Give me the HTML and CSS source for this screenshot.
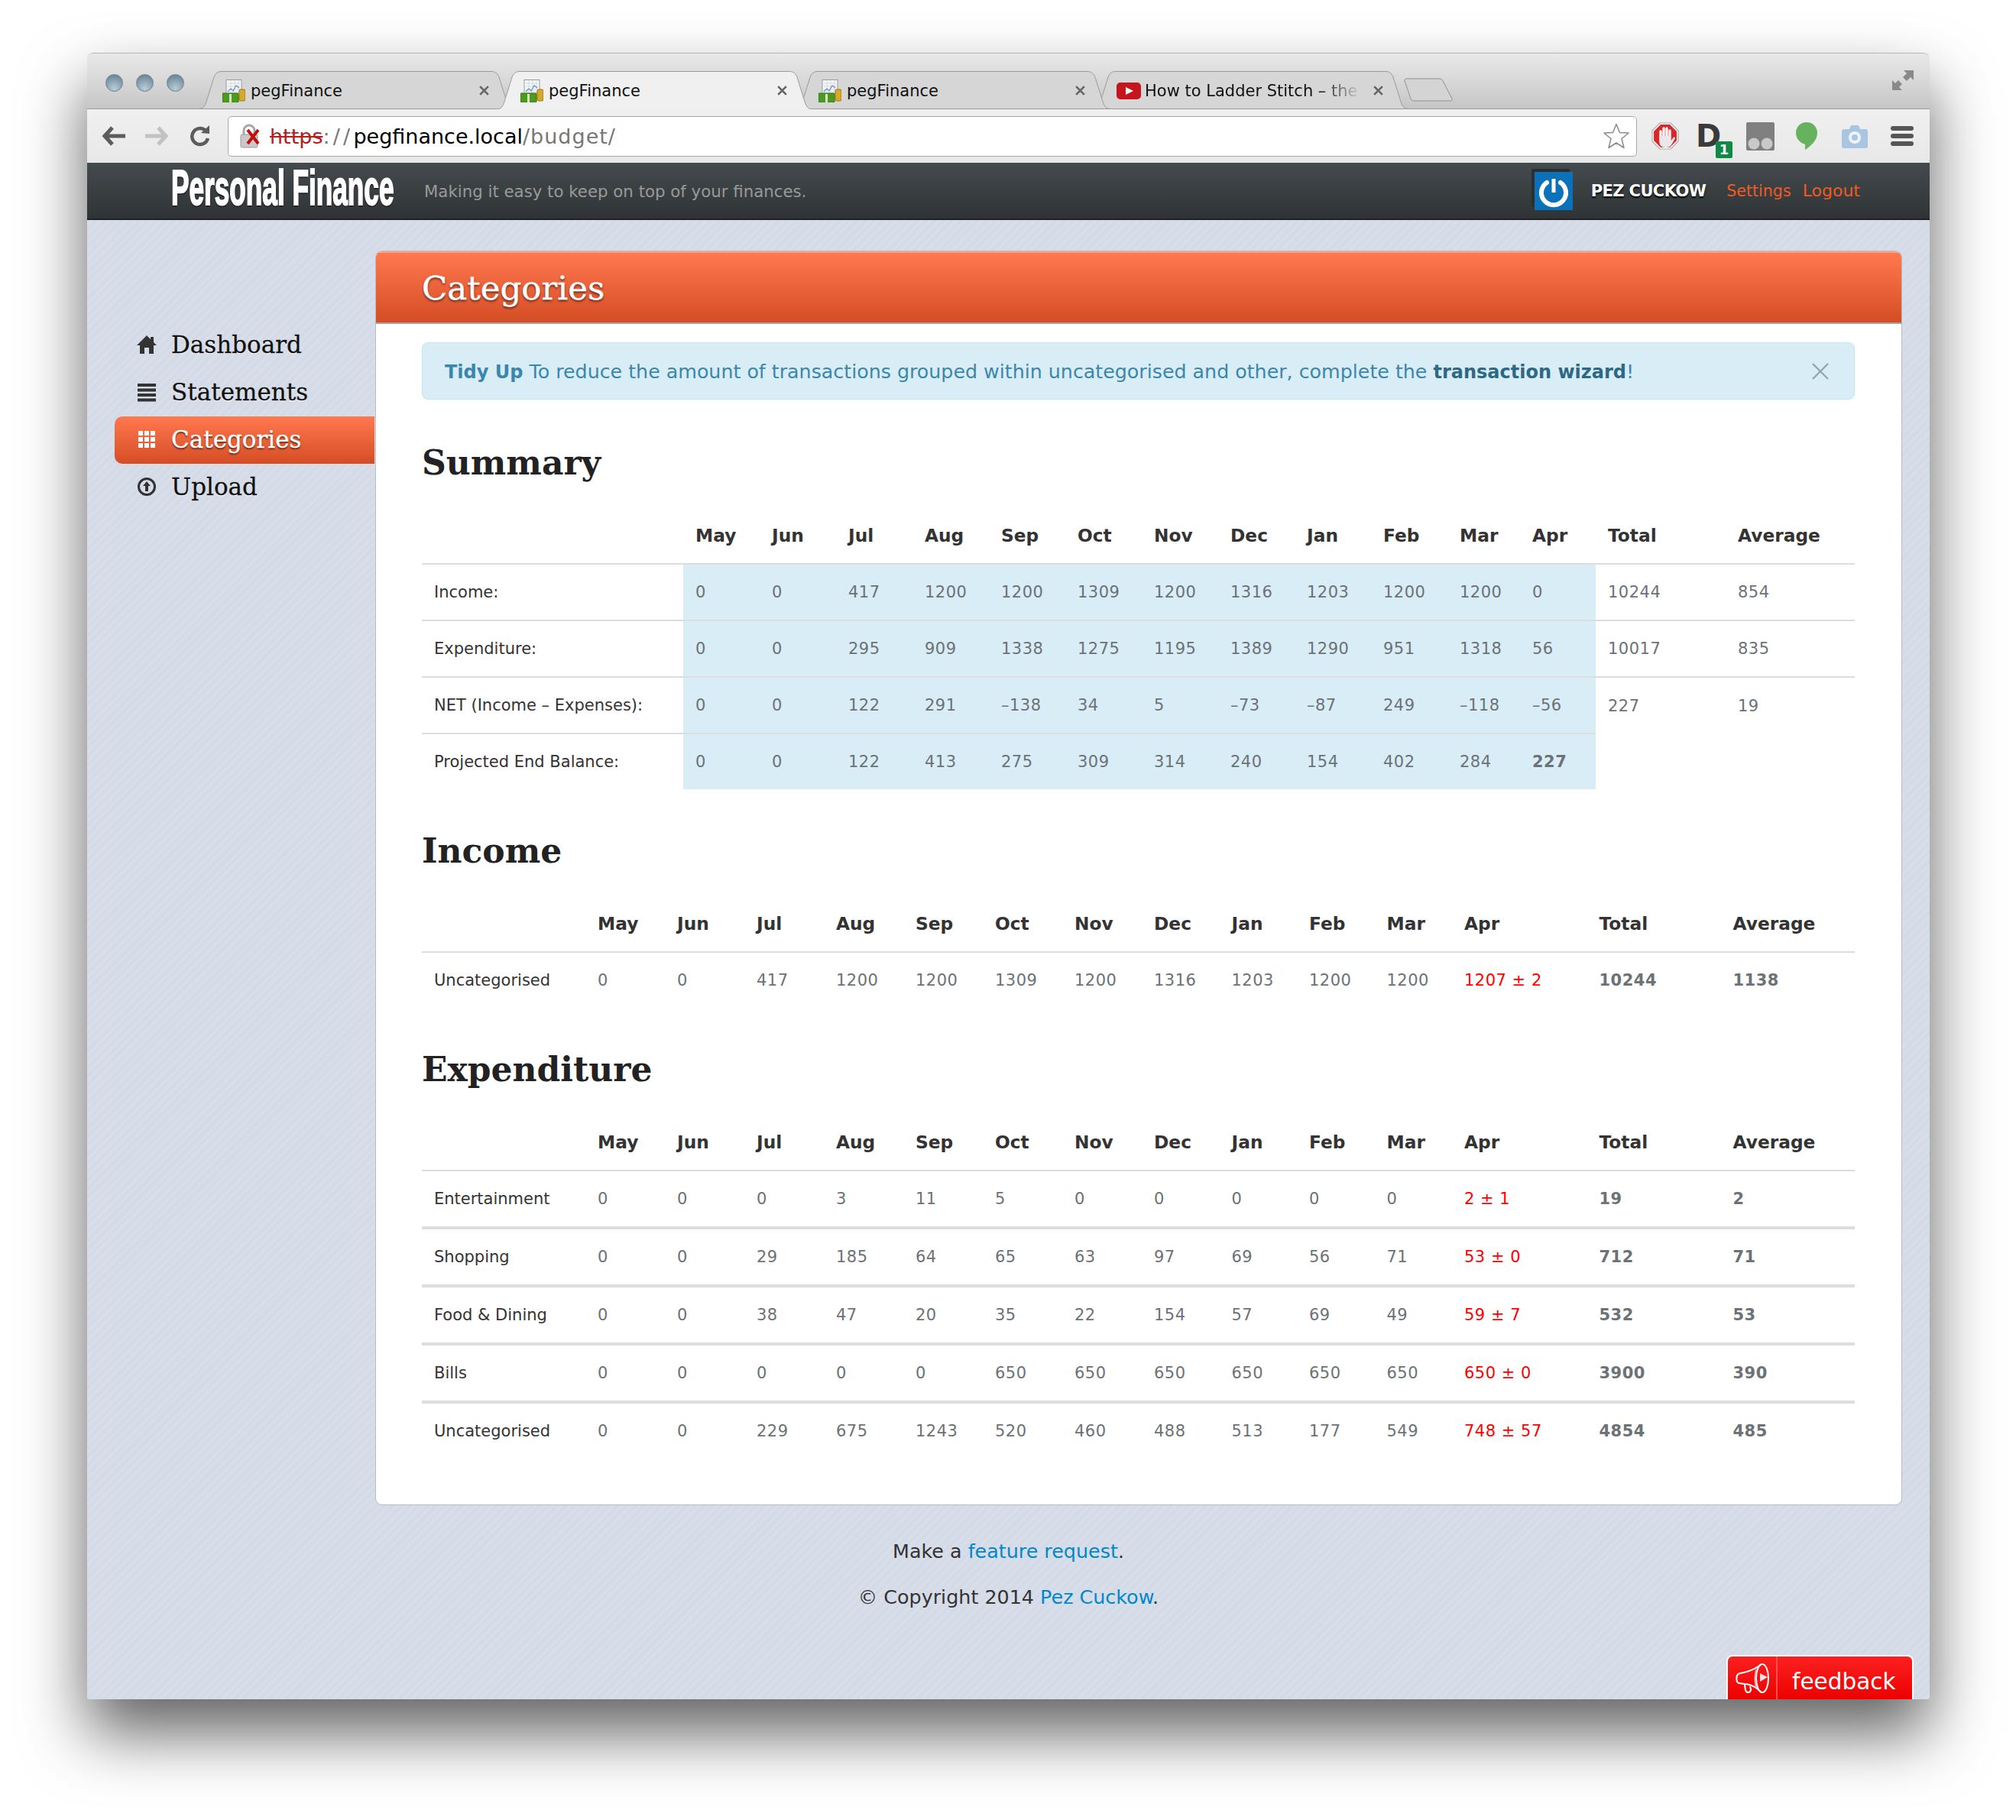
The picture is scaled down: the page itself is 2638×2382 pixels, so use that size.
FILE: index.html
```html
<!DOCTYPE html>
<html>

<head>
    <title>pegFinance</title>
    <link rel="stylesheet" href="styles.css">
</head>

<body>
    <svg class="symbols">
        <symbol id="fav" viewBox="0 0 30 30">
            <rect x="5" y="0.5" width="20" height="24" fill="#f4f6f8" stroke="#9a9a9a"/>
            <path d="M7 5h16M7 9h16M7 13h16M7 17h16M11 1v22M16 1v22M21 1v22" stroke="#d5dbe2" stroke-width="1"/>
            <path d="M7 16l4-4 3 3 4-7 4 3" fill="none" stroke="#6d8fc2" stroke-width="1.2"/>
            <rect x="22" y="13" width="8" height="15" rx="2" fill="#d6a92a" stroke="#9b7713"/>
            <rect x="0" y="18" width="21" height="12" rx="1" fill="#4d9a1e" stroke="#35720f"/>
            <rect x="9" y="19" width="3" height="11" fill="#d8e8c8"/>
        </symbol>
        <symbol id="close" viewBox="0 0 14 14">
            <path d="M2 2l10 10M12 2L2 12" stroke="#666" stroke-width="2.4"/>
        </symbol>
    </svg>

    <div class="window">
        <div class="tabstrip">
            <div class="lights"><span class="light"></span><span class="light"></span><span class="light"></span></div>
            <div class="tabs">
                <div class="tab">
                    <svg class="tab-shape" viewBox="0 0 415 50" preserveAspectRatio="none"><path d="M0 49.5C7 49.5 9 46 11 40L21 8C23 3 26 .5 31 .5H384C389 .5 392 3 394 8L404 40C406 46 408 49.5 415 49.5Z"/></svg>
                    <svg class="favicon"><use href="#fav"/></svg>
                    <span class="tab-title">pegFinance</span>
                    <svg class="tab-close"><use href="#close"/></svg>
                </div>
                <div class="tab tab-active">
                    <svg class="tab-shape" viewBox="0 0 415 50" preserveAspectRatio="none"><path d="M0 50C7 50 9 46 11 40L21 8C23 3 26 .5 31 .5H384C389 .5 392 3 394 8L404 40C406 46 408 50 415 50"/></svg>
                    <svg class="favicon"><use href="#fav"/></svg>
                    <span class="tab-title">pegFinance</span>
                    <svg class="tab-close"><use href="#close"/></svg>
                </div>
                <div class="tab">
                    <svg class="tab-shape" viewBox="0 0 415 50" preserveAspectRatio="none"><path d="M0 49.5C7 49.5 9 46 11 40L21 8C23 3 26 .5 31 .5H384C389 .5 392 3 394 8L404 40C406 46 408 49.5 415 49.5Z"/></svg>
                    <svg class="favicon"><use href="#fav"/></svg>
                    <span class="tab-title">pegFinance</span>
                    <svg class="tab-close"><use href="#close"/></svg>
                </div>
                <div class="tab tab-last">
                    <svg class="tab-shape" viewBox="0 0 415 50" preserveAspectRatio="none"><path d="M0 49.5C7 49.5 9 46 11 40L21 8C23 3 26 .5 31 .5H384C389 .5 392 3 394 8L404 40C406 46 408 49.5 415 49.5Z"/></svg>
                    <svg class="favicon favicon-yt" viewBox="0 0 32 22"><rect width="32" height="22" rx="5" fill="#c4161c"/><path d="M12 6l10 5-10 5z" fill="#fff"/></svg>
                    <span class="tab-title tab-title-fade">How to Ladder Stitch – the</span>
                    <svg class="tab-close"><use href="#close"/></svg>
                </div>
            </div>
            <svg class="newtab" viewBox="0 0 64 31"><path d="M1 4C1 2 2 1 4 1H46C49 1 50 2 51 4L63 27C64 29 63 30 61 30H13C11 30 10 29 9 27Z" fill="#d4d4d4" stroke="#8f8f8f"/></svg>
            <svg class="expand" viewBox="0 0 28 28"><path d="M15 1h13v13l-4-4-5 5-5-5 5-5zM0 14l4 4 4-4 5 5-4 4 4 4H0z" fill="#8a8a8a"/></svg>
        </div>

        <div class="toolbar">
            <svg class="nav nav-back" viewBox="0 0 31 26"><path d="M13 2L3 13l10 11M3 13h27" fill="none" stroke="#5c5c5c" stroke-width="5"/></svg>
            <svg class="nav nav-forward" viewBox="0 0 31 26"><path d="M18 2l10 11-10 11M28 13H1" fill="none" stroke="#c2c2c2" stroke-width="5"/></svg>
            <svg class="nav nav-reload" viewBox="0 0 27 30"><path d="M22 9A10.500 10.500 0 1 0 24 18" fill="none" stroke="#5c5c5c" stroke-width="4.500"/><path d="M15 11L26 12V1z" fill="#5c5c5c"/></svg>
            <div class="address">
                <svg class="lock" viewBox="0 0 28 32">
                    <path d="M6 14V9a7 7 0 0 1 14 0v5" fill="none" stroke="#a8a8a8" stroke-width="3"/>
                    <rect x="2" y="14" width="22" height="17" rx="2" fill="#c9c9c9" stroke="#9a9a9a"/>
                    <path d="M11 8l14 18M25 8L11 26" stroke="#c40e0e" stroke-width="4"/>
                </svg>
                <span class="url-https">https</span><span class="url-sep">://</span><span class="url-host">pegfinance.local</span><span class="url-path">/budget/</span>
                <svg class="star" viewBox="0 0 36 34"><path d="M18 1.500l4.500 11 11.500.500-9 7.500 3 12L18 26l-10 6.500 3-12-9-7.500 11.500-.500z" fill="#fff" stroke="#8a8a8a" stroke-width="1.500" stroke-linejoin="round"/></svg>
            </div>
            <svg class="ext ext-stop" viewBox="0 0 36 36">
                <path d="M11 1h14l10 10v14L25 35H11L1 25V11z" fill="#fff" stroke="#a8a8a8" stroke-width="1.200"/>
                <path d="M12 3h12l9 9v12l-9 9H12l-9-9V12z" fill="#d9282b"/>
                <path d="M12 22V12M16 19V8M20 19V8M24 20V11" stroke="#f8f8f8" stroke-width="3.400" stroke-linecap="round"/>
                <path d="M10.300 18h15.400v6l3-4c1.500-1.500 3 0 2 1.500l-4 7c-1.500 3-4 4.500-8 4.500-6 0-8.400-3-8.400-8z" fill="#e9e9e9"/>
            </svg>
            <div class="ext ext-d">
                <span class="ext-d-letter">D</span>
                <span class="ext-d-badge">1</span>
            </div>
            <svg class="ext ext-ghost" viewBox="0 0 37 37"><rect width="37" height="37" rx="2" fill="#808080"/><circle cx="10" cy="28" r="7.500" fill="#c9c9c9"/><circle cx="27" cy="28" r="7.500" fill="#c9c9c9"/></svg>
            <svg class="ext ext-bubble" viewBox="0 0 28 36"><path d="M14 0C6 0 0 6 0 14c0 8 6 13 12 15v7c5-3 16-11 16-22C28 6 22 0 14 0z" fill="#67b25f"/></svg>
            <svg class="ext ext-camera" viewBox="0 0 34 31"><path d="M3 6h7l2-5h10l2 5h7c2 0 3 1 3 3v19c0 2-1 3-3 3H3c-2 0-3-1-3-3V9c0-2 1-3 3-3z" fill="#a8c6e0"/><circle cx="17" cy="17" r="8" fill="#eef3f8"/><circle cx="17" cy="17" r="4" fill="#a8c6e0"/></svg>
            <div class="menu"><span></span><span></span><span></span></div>
        </div>

        <div class="page">
            <header class="site-header">
                <div class="brand"><span class="brand-text">Personal Finance</span></div>
                <span class="tagline">Making it easy to keep on top of your finances.</span>
                <div class="user">
                    <svg class="power" viewBox="0 0 50 50"><path d="M16 14a16 16 0 1 0 18 0" fill="none" stroke="#fff" stroke-width="6" stroke-linecap="round"/><path d="M25 9v18" stroke="#fff" stroke-width="5"/></svg>
                    <span class="user-name">PEZ CUCKOW</span>
                    <a class="user-link">Settings</a>
                    <a class="user-link">Logout</a>
                </div>
            </header>

            <div class="content">
                <nav class="sidebar">
                    <a class="side-item">
                        <svg class="side-icon" viewBox="0 0 26 26"><path d="M13 1L0 14h4v11h6v-8h6v8h6V14h4l-4-4V3h-4v3z" fill="#333"/></svg>
                        Dashboard
                    </a>
                    <a class="side-item">
                        <svg class="side-icon" viewBox="0 0 26 26"><path d="M1 2h24v4H1zM1 8.500h24v4H1zM1 15h24v4H1zM1 21.500h24v4H1z" fill="#333"/></svg>
                        Statements
                    </a>
                    <a class="side-item side-item-active">
                        <svg class="side-icon" viewBox="0 0 26 26"><path d="M2 2h6v6H2zM10 2h6v6h-6zM18 2h6v6h-6zM2 10h6v6H2zM10 10h6v6h-6zM18 10h6v6h-6zM2 18h6v6H2zM10 18h6v6h-6zM18 18h6v6h-6z" fill="#fff"/></svg>
                        Categories
                    </a>
                    <a class="side-item">
                        <svg class="side-icon" viewBox="0 0 26 26"><circle cx="13" cy="13" r="10.500" fill="none" stroke="#333" stroke-width="3"/><path d="M13 6l5 6h-3v7h-4v-7H8z" fill="#333"/></svg>
                        Upload
                    </a>
                </nav>

                <main class="main">
                    <section class="panel">
                        <h1 class="panel-title">Categories</h1>
                        <div class="panel-body">
                            <div class="alert">
                                <span><b>Tidy Up</b> To reduce the amount of transactions grouped within uncategorised and other, complete the <a class="alert-link">transaction wizard</a>!</span>
                                <svg class="alert-close" viewBox="0 0 22 22"><path d="M1 1l20 20M21 1L1 21" stroke="#8fa3ae" stroke-width="2.200"/></svg>
                            </div>

                            <h2 class="section-title">Summary</h2>
                            <table class="data data-summary">
                                <colgroup>
                                    <col class="c-label-s">
                                    <col class="c-s"><col class="c-s"><col class="c-s"><col class="c-s"><col class="c-s"><col class="c-s"><col class="c-s"><col class="c-s"><col class="c-s"><col class="c-s">
                                    <col class="c-s-mar"><col class="c-s-apr">
                                    <col class="c-total-s"><col>
                                </colgroup>
                                <thead>
                                    <tr><th></th><th>May</th><th>Jun</th><th>Jul</th><th>Aug</th><th>Sep</th><th>Oct</th><th>Nov</th><th>Dec</th><th>Jan</th><th>Feb</th><th>Mar</th><th>Apr</th><th>Total</th><th>Average</th></tr>
                                </thead>
                                <tbody>
                                    <tr><td class="label">Income:</td><td class="info">0</td><td class="info">0</td><td class="info">417</td><td class="info">1200</td><td class="info">1200</td><td class="info">1309</td><td class="info">1200</td><td class="info">1316</td><td class="info">1203</td><td class="info">1200</td><td class="info">1200</td><td class="info">0</td><td>10244</td><td>854</td></tr>
                                    <tr><td class="label">Expenditure:</td><td class="info">0</td><td class="info">0</td><td class="info">295</td><td class="info">909</td><td class="info">1338</td><td class="info">1275</td><td class="info">1195</td><td class="info">1389</td><td class="info">1290</td><td class="info">951</td><td class="info">1318</td><td class="info">56</td><td>10017</td><td>835</td></tr>
                                    <tr><td class="label">NET (Income – Expenses):</td><td class="info">0</td><td class="info">0</td><td class="info">122</td><td class="info">291</td><td class="info">–138</td><td class="info">34</td><td class="info">5</td><td class="info">–73</td><td class="info">–87</td><td class="info">249</td><td class="info">–118</td><td class="info">–56</td><td>227</td><td>19</td></tr>
                                    <tr class="row-balance"><td class="label">Projected End Balance:</td><td class="info">0</td><td class="info">0</td><td class="info">122</td><td class="info">413</td><td class="info">275</td><td class="info">309</td><td class="info">314</td><td class="info">240</td><td class="info">154</td><td class="info">402</td><td class="info">284</td><td class="info strong">227</td><td class="blank"></td><td class="blank"></td></tr>
                                </tbody>
                            </table>

                            <h2 class="section-title">Income</h2>
                            <table class="data data-detail">
                                <colgroup>
                                    <col class="c-label-d">
                                    <col class="c-a"><col class="c-a"><col class="c-a"><col class="c-a"><col class="c-a"><col class="c-a"><col class="c-a">
                                    <col class="c-b"><col class="c-b"><col class="c-b"><col class="c-b">
                                    <col class="c-apr-d"><col class="c-total-d"><col>
                                </colgroup>
                                <thead>
                                    <tr><th></th><th>May</th><th>Jun</th><th>Jul</th><th>Aug</th><th>Sep</th><th>Oct</th><th>Nov</th><th>Dec</th><th>Jan</th><th>Feb</th><th>Mar</th><th>Apr</th><th>Total</th><th>Average</th></tr>
                                </thead>
                                <tbody>
                                    <tr><td class="label">Uncategorised</td><td>0</td><td>0</td><td>417</td><td>1200</td><td>1200</td><td>1309</td><td>1200</td><td>1316</td><td>1203</td><td>1200</td><td>1200</td><td class="projected">1207 ± 2</td><td class="strong">10244</td><td class="strong">1138</td></tr>
                                </tbody>
                            </table>

                            <h2 class="section-title">Expenditure</h2>
                            <table class="data data-detail data-thick">
                                <colgroup>
                                    <col class="c-label-d">
                                    <col class="c-a"><col class="c-a"><col class="c-a"><col class="c-a"><col class="c-a"><col class="c-a"><col class="c-a">
                                    <col class="c-b"><col class="c-b"><col class="c-b"><col class="c-b">
                                    <col class="c-apr-d"><col class="c-total-d"><col>
                                </colgroup>
                                <thead>
                                    <tr><th></th><th>May</th><th>Jun</th><th>Jul</th><th>Aug</th><th>Sep</th><th>Oct</th><th>Nov</th><th>Dec</th><th>Jan</th><th>Feb</th><th>Mar</th><th>Apr</th><th>Total</th><th>Average</th></tr>
                                </thead>
                                <tbody>
                                    <tr><td class="label">Entertainment</td><td>0</td><td>0</td><td>0</td><td>3</td><td>11</td><td>5</td><td>0</td><td>0</td><td>0</td><td>0</td><td>0</td><td class="projected">2 ± 1</td><td class="strong">19</td><td class="strong">2</td></tr>
                                    <tr><td class="label">Shopping</td><td>0</td><td>0</td><td>29</td><td>185</td><td>64</td><td>65</td><td>63</td><td>97</td><td>69</td><td>56</td><td>71</td><td class="projected">53 ± 0</td><td class="strong">712</td><td class="strong">71</td></tr>
                                    <tr><td class="label">Food &amp; Dining</td><td>0</td><td>0</td><td>38</td><td>47</td><td>20</td><td>35</td><td>22</td><td>154</td><td>57</td><td>69</td><td>49</td><td class="projected">59 ± 7</td><td class="strong">532</td><td class="strong">53</td></tr>
                                    <tr><td class="label">Bills</td><td>0</td><td>0</td><td>0</td><td>0</td><td>0</td><td>650</td><td>650</td><td>650</td><td>650</td><td>650</td><td>650</td><td class="projected">650 ± 0</td><td class="strong">3900</td><td class="strong">390</td></tr>
                                    <tr><td class="label">Uncategorised</td><td>0</td><td>0</td><td>229</td><td>675</td><td>1243</td><td>520</td><td>460</td><td>488</td><td>513</td><td>177</td><td>549</td><td class="projected">748 ± 57</td><td class="strong">4854</td><td class="strong">485</td></tr>
                                </tbody>
                            </table>
                        </div>
                    </section>
                </main>
            </div>

            <footer class="footer">
                <p>Make a <a>feature request</a>.</p>
                <p>© Copyright 2014 <a>Pez Cuckow</a>.</p>
            </footer>

            <div class="feedback">
                <span class="feedback-icon">
                    <svg viewBox="0 0 44 40">
                        <path d="M34 1C28 6 17 11 6 13C0 14 0 25 5 26L12 27C20 27 27 31 34 38" fill="none" stroke="#fff" stroke-width="2"/>
                        <path d="M12 28l1 7c1 4 7 4 7-1l-1-4" fill="none" stroke="#fff" stroke-width="2"/>
                        <ellipse cx="35" cy="19.500" rx="8" ry="18.500" fill="none" stroke="#fff" stroke-width="2"/>
                        <path d="M27 8c-2 7-2 17 0 24" fill="none" stroke="#f6b5b5" stroke-width="1.500"/>
                        <path d="M32 13l10 5-10 6z" fill="#fbe3e3"/>
                    </svg>
                </span>
                <span class="feedback-text">feedback</span>
            </div>
        </div>
    </div>
</body>

</html>
```

FILE: styles.css
```css
html,
body {
    margin: 0;
    height: 2382px;
    overflow: hidden;
    background-color: #fff;
}

body {
    font-family: "DejaVu Sans", sans-serif;
    color: #333;
}

.symbols {
    position: absolute;
    width: 0;
    height: 0;
}

/* browser window */

.window {
    width: 2411px;
    height: 2155px;
    margin: 69px 0 0 114px;
    display: flex;
    flex-direction: column;
    overflow: hidden;
    border-radius: 8px 8px 4px 4px;
    box-shadow: 0 44px 84px rgba(0, 0, 0, 0.62);
}

.tabstrip {
    flex: none;
    box-sizing: border-box;
    height: 74px;
    display: flex;
    border-bottom: 1px solid #9a9a9a;
    border-top: 1px solid #b5b5b5;
    border-radius: 8px 8px 0 0;
    background: linear-gradient(#e9e9e9, #c6c6c6);
}

.lights {
    display: flex;
    gap: 17px;
    margin: 27px 0 0 24px;
    align-self: flex-start;
}

.light {
    width: 23px;
    height: 23px;
    border-radius: 50%;
    box-sizing: border-box;
    border: 1px solid #6f828e;
    background: radial-gradient(circle at 50% 85%, #b9cdd8, #8ba2b1 50%, #5f7b8e 100%);
}

.tabs {
    display: flex;
    align-self: flex-end;
    margin: 0 0 -1px 18px;
}

.tab {
    position: relative;
    z-index: 2;
    width: 415px;
    height: 50px;
    margin-right: -25px;
    display: flex;
    align-items: center;
    padding: 1px 0 0 32px;
    box-sizing: border-box;
    font-size: 21px;
    color: #111;
}

.tab-last {
    z-index: 1;
}

.tab-active {
    z-index: 3;
}

.tab-shape {
    position: absolute;
    left: 0;
    top: 0;
    width: 100%;
    height: 100%;
    fill: #d6d6d6;
    stroke: #9a9a9a;
}

.tab-active .tab-shape {
    fill: #f0f0f0;
}

.favicon {
    position: relative;
    flex: none;
    width: 30px;
    height: 30px;
    margin-right: 7px;
}

.favicon-yt {
    width: 32px;
    height: 22px;
    margin-right: 5px;
}

.tab-title {
    position: relative;
    flex: 1;
    white-space: nowrap;
    overflow: hidden;
}

.tab-title-fade {
    -webkit-mask-image: linear-gradient(to right, #000 80%, transparent);
    mask-image: linear-gradient(to right, #000 80%, transparent);
}

.tab-close {
    position: relative;
    flex: none;
    width: 15px;
    height: 15px;
    margin-right: 33px;
    margin-left: 14px;
}

.newtab {
    flex: none;
    width: 64px;
    height: 31px;
    margin: 32px 0 0 18px;
}

.expand {
    flex: none;
    width: 28px;
    height: 28px;
    margin: 21px 21px 0 auto;
}

/* toolbar */

.toolbar {
    flex: none;
    box-sizing: border-box;
    height: 70px;
    display: flex;
    align-items: center;
    padding: 0 21px 0 20px;
    background: linear-gradient(#f0f0f0, #e8e8e8);
}

.nav {
    flex: none;
}

.nav-back,
.nav-forward {
    width: 31px;
    height: 26px;
}

.nav-forward {
    margin-left: 24px;
}

.nav-reload {
    width: 27px;
    height: 30px;
    margin-left: 28px;
}

.address {
    flex: none;
    box-sizing: border-box;
    width: 1844px;
    height: 53px;
    margin-left: 23px;
    display: flex;
    align-items: center;
    padding: 0 8px 0 14px;
    background-color: #fff;
    border: 1px solid #aaa;
    border-radius: 5px;
    font-size: 27px;
    color: #777;
}

.lock {
    flex: none;
    width: 28px;
    height: 32px;
    margin-right: 12px;
}

.url-https {
    color: #b02020;
    text-decoration: line-through;
}

.url-sep {
    letter-spacing: 4.200px;
}

.url-host {
    color: #000;
}

.url-path {
    letter-spacing: 1px;
}

.star {
    flex: none;
    width: 36px;
    height: 34px;
    margin-left: auto;
}

.ext {
    flex: none;
}

.ext-stop {
    width: 36px;
    height: 36px;
    margin-left: 19px;
}

.ext-d {
    position: relative;
    width: 48px;
    height: 46px;
    margin-left: 22px;
    margin-top: 11px;
}

.ext-d-letter {
    display: block;
    font-size: 40px;
    font-weight: bold;
    line-height: 34px;
    color: #3a3a3a;
}

.ext-d-badge {
    position: absolute;
    right: 0;
    bottom: 0;
    width: 22px;
    height: 22px;
    border-radius: 2px;
    background-color: #0f8a46;
    color: #fff;
    font-size: 18px;
    font-weight: bold;
    line-height: 22px;
    text-align: center;
}

.ext-ghost {
    width: 37px;
    height: 37px;
    margin-left: 18px;
}

.ext-bubble {
    width: 28px;
    height: 36px;
    margin-left: 28px;
}

.ext-camera {
    width: 34px;
    height: 31px;
    margin-left: 32px;
}

.menu {
    flex: none;
    width: 30px;
    margin-left: 30px;
    display: flex;
    flex-direction: column;
    gap: 4px;
}

.menu span {
    height: 6px;
    border-radius: 3px;
    background-color: #555;
}

/* page */

.page {
    position: relative;
    flex: 1;
    min-height: 0;
    background-color: #d6dde8;
    background-image: repeating-linear-gradient(135deg, #d7dee9 0 4px, #d4dbe7 4px 8px);
}

.site-header {
    box-sizing: border-box;
    height: 75px;
    display: flex;
    align-items: center;
    padding: 0 91px 0 110px;
    background: linear-gradient(#444b4e, #2f3335);
    border-bottom: 2px solid #222;
}

.brand {
    flex: none;
    width: 290px;
    margin-top: -8px;
}

.brand-text {
    display: block;
    width: 580px;
    font: bold 64px/66px "Liberation Sans", sans-serif;
    color: #fff;
    white-space: nowrap;
    transform: scaleX(0.55);
    transform-origin: left center;
    -webkit-text-stroke: 2px #fff;
    text-shadow: 0 2px 2px #000;
}

.tagline {
    margin: 2px 0 0 41px;
    font-size: 21.300px;
    color: #999;
    white-space: nowrap;
}

.user {
    margin-left: auto;
    display: flex;
    align-items: center;
}

.power {
    flex: none;
    width: 50px;
    height: 50px;
    background-color: #0b72b9;
    box-shadow: -4px -4px 0 #2b2f31;
}

.user-name {
    margin: 0 27px 0 24px;
    font-size: 21px;
    font-weight: bold;
    letter-spacing: -0.600px;
    color: #fff;
    text-shadow: 0 2px 2px #000;
    white-space: nowrap;
}

.user-link {
    margin-right: 15px;
    font-size: 20.600px;
    color: #f15a22;
}

.user-link:last-child {
    margin-right: 0;
    font-size: 22px;
}

.content {
    display: flex;
    padding: 40px 36px 0 36px;
}

/* sidebar */

.sidebar {
    flex: none;
    width: 341px;
    padding-top: 93px;
}

.side-item {
    box-sizing: border-box;
    height: 62px;
    display: flex;
    align-items: center;
    gap: 19px;
    padding: 0 0 2px 29px;
    font-family: "DejaVu Serif", serif;
    font-size: 31px;
    color: #111;
    text-shadow: 0 1px 1px #fff;
    -webkit-text-stroke: 0.300px currentColor;
}

.side-item-active {
    margin-right: 1px;
    color: #fff;
    border-radius: 10px 0 0 10px;
    background: linear-gradient(#ff7850, #d44d25);
    text-shadow: 0 2px 2px rgba(0, 0, 0, 0.6);
}

.side-icon {
    flex: none;
    width: 26px;
    height: 26px;
}

/* panel */

.main {
    flex: 1;
    min-width: 0;
}

.panel {
    box-sizing: border-box;
    height: 1642px;
    background-color: #fff;
    border: 1px solid #b5bdc9;
    border-radius: 9px;
    overflow: hidden;
}

.panel-title {
    box-sizing: border-box;
    height: 95px;
    margin: 0;
    padding: 0 0 0 60px;
    display: flex;
    align-items: center;
    font: normal 43.500px "DejaVu Serif", serif;
    color: #fff;
    background: linear-gradient(#ff7850, #d44d25);
    border-top: 2px solid #ff9d85;
    border-bottom: 2px solid #a3a79e;
    text-shadow: 0 2px 3px rgba(0, 0, 0, 0.65);
    -webkit-text-stroke: 0.400px #fff;
}

.panel-body {
    padding: 24px 61px 0 60px;
}

.alert {
    box-sizing: border-box;
    height: 75px;
    display: flex;
    align-items: center;
    justify-content: space-between;
    padding: 2px 16px 0 29px;
    font-size: 25.300px;
    color: #3a87ad;
    background-color: #d9edf7;
    border: 1px solid #bce8f1;
    border-radius: 8px;
}

.alert b,
.alert-link {
    font-size: 24px;
    font-weight: bold;
}

.alert-link {
    color: #2d6987;
}

.alert-close {
    flex: none;
    width: 22px;
    height: 22px;
    margin: -2px 17px 0 0;
}

.section-title {
    height: 60px;
    margin: 51px 0 28px 0;
    font: bold 44px/60px "DejaVu Serif", serif;
    color: #222;
}

.alert + .section-title {
    margin-top: 53px;
}

/* tables */

.data {
    width: 100%;
    table-layout: fixed;
    border-collapse: collapse;
}

.c-label-s { width: 342px; }
.c-s { width: 100px; }
.c-s-mar { width: 95px; }
.c-s-apr { width: 99px; }
.c-total-s { width: 170px; }

.c-label-d { width: 214px; }
.c-a { width: 104px; }
.c-b { width: 101.500px; }
.c-apr-d { width: 176.500px; }
.c-total-d { width: 175px; }

.data th {
    height: 73px;
    padding: 0 16px;
    text-align: left;
    font-size: 23.300px;
    font-weight: bold;
    color: #333;
    border-bottom: 2px solid #ddd;
}

.data td {
    height: 72px;
    padding: 0 16px;
    font-size: 21px;
    letter-spacing: 0.500px;
    color: #6c7275;
    white-space: nowrap;
    border-top: 2px solid #ddd;
}

.data tbody tr:first-child td {
    border-top: none;
}

.data td.label {
    letter-spacing: 0;
    color: #333;
}

.data td.info {
    background-color: #d9edf7;
}

.data td.blank {
    border-top: none;
}

.data td.strong {
    font-weight: bold;
}

.data td.projected {
    color: #f00;
}

.data-thick td {
    height: 72px;
    border-top-width: 4px;
}

/* footer */

.footer {
    padding-top: 42px;
    text-align: center;
    font-size: 25.400px;
    color: #333;
}

.footer p {
    height: 36px;
    margin: 0 0 24px 0;
    line-height: 36px;
}

.footer a {
    color: #0088cc;
}

/* feedback tab */

.feedback {
    position: absolute;
    right: 21px;
    bottom: 0;
    box-sizing: border-box;
    width: 245px;
    height: 58px;
    display: flex;
    color: #fff;
    background: linear-gradient(#fb2020, #ee0000);
    border: 2px solid #fff;
    border-bottom: none;
    border-radius: 8px 8px 0 0;
}

.feedback-icon {
    flex: none;
    width: 65px;
    padding: 9px 0 0 10px;
    box-sizing: border-box;
    border-right: 2px solid #f45050;
}

.feedback-icon svg {
    display: block;
    width: 44px;
    height: 40px;
}

.feedback-text {
    margin: 8px 0 0 19px;
    font-size: 29.500px;
    line-height: 50px;
}
```
